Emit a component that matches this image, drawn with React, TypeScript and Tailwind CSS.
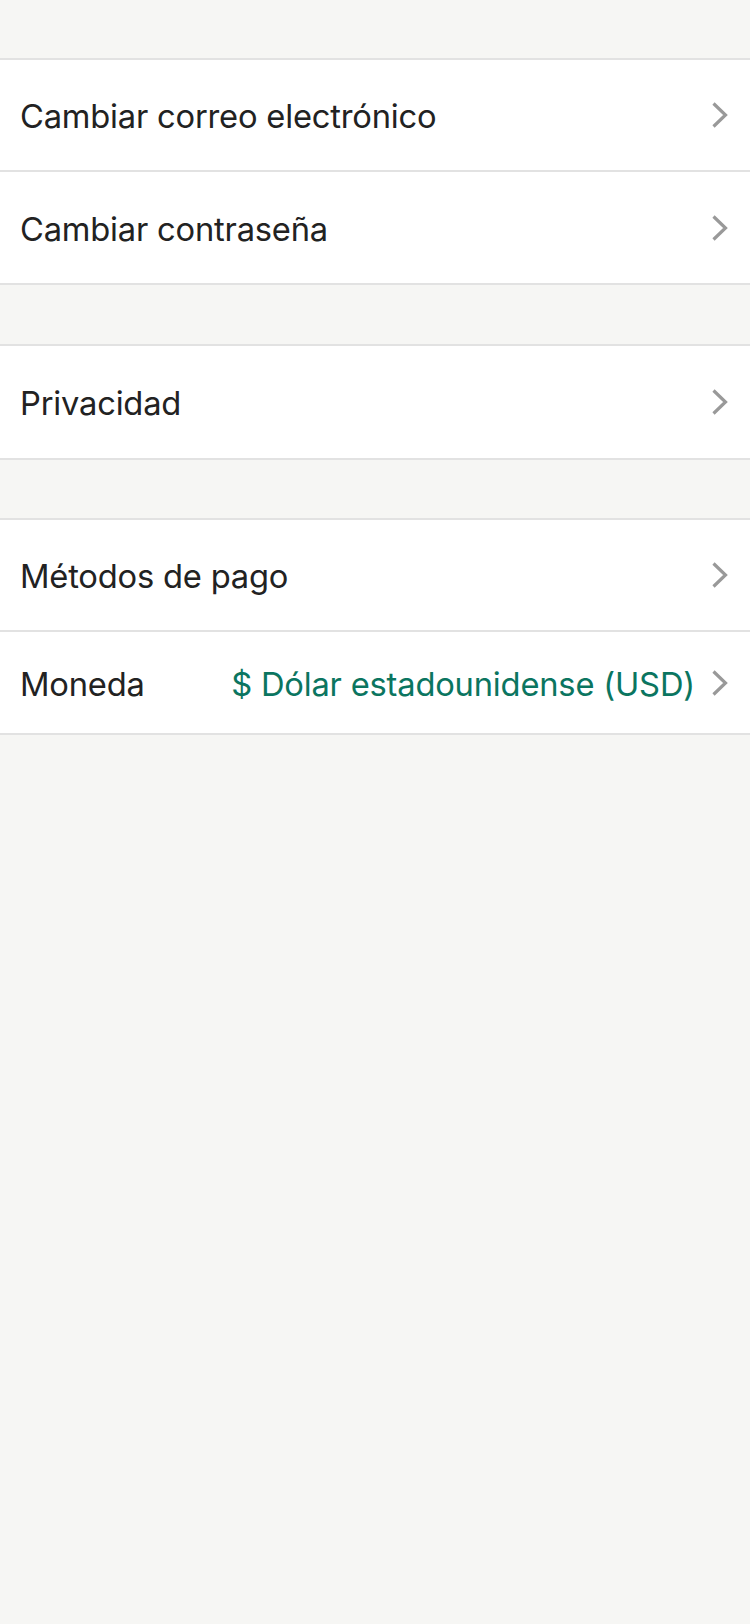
import React from "react";

const font = { fontFamily: "Inter, 'Liberation Sans', sans-serif" };

function Chevron() {
  return (
    <svg width="17" height="28" viewBox="0 0 17 28" className="shrink-0" fill="none">
      <polyline points="2.5,2.5 14.5,14 2.5,25.5" stroke="#999999" strokeWidth="3.2" strokeLinecap="butt" strokeLinejoin="miter" />
    </svg>
  );
}

function Row({ label, value, h = "h-[112px]" }: { label: string; value?: string; h?: string }) {
  return (
    <div className={`flex items-center ${h} pl-[20px] pr-[22px] bg-white`}>
      <span className="pt-[4px] text-[32.7px] text-[#222222] tracking-[-0.2px]">{label}</span>
      <div className="flex-1" />
      {value && <span className="pt-[4px] text-[32.7px] text-[#0b7560] mr-[16px] tracking-[-0.2px]">{value}</span>}
      <Chevron />
    </div>
  );
}

export default function App() {
  return (
    <div className="min-h-[1624px] w-full bg-[#f6f6f4] pt-[58px]" style={font}>
      <div className="border-y-2 border-[#e2e2e2] divide-y-2 divide-[#e2e2e2]">
        <Row label="Cambiar correo electrónico" />
        <Row label="Cambiar contraseña" h="h-[111px]" />
      </div>
      <div className="mt-[59px] border-y-2 border-[#e2e2e2]">
        <Row label="Privacidad" />
      </div>
      <div className="mt-[58px] border-y-2 border-[#e2e2e2] divide-y-2 divide-[#e2e2e2]">
        <Row label="Métodos de pago" />
        <Row label="Moneda" value="$ Dólar estadounidense (USD)" h="h-[101px]" />
      </div>
    </div>
  );
}
